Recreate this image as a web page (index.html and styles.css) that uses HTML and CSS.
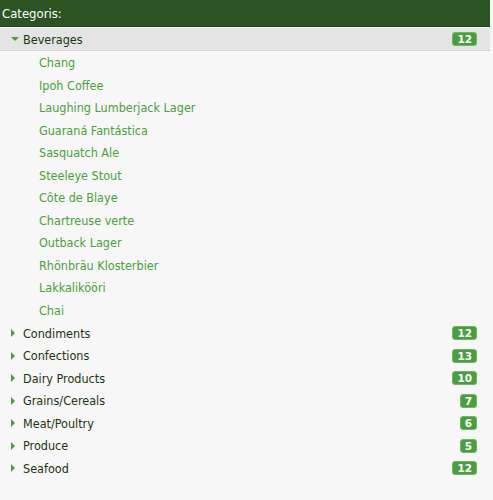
FILE: index.html
```html
<!DOCTYPE html>
<html>
<head>
<meta charset="utf-8">
<link rel="stylesheet" href="styles.css">
</head>
<body>
<div class="panel">
  <div class="header">Categoris:</div>
  <ul class="tree">
    <li class="cat open">
      <div class="row selected"><span class="arrow down"></span><span class="name">Beverages</span><span class="badge">12</span></div>
      <ul class="items">
        <li>Chang</li>
        <li>Ipoh Coffee</li>
        <li>Laughing Lumberjack Lager</li>
        <li>Guaraná Fantástica</li>
        <li>Sasquatch Ale</li>
        <li>Steeleye Stout</li>
        <li>Côte de Blaye</li>
        <li>Chartreuse verte</li>
        <li>Outback Lager</li>
        <li>Rhönbräu Klosterbier</li>
        <li>Lakkalikööri</li>
        <li>Chai</li>
      </ul>
    </li>
    <li class="cat"><div class="row"><span class="arrow right"></span><span class="name">Condiments</span><span class="badge">12</span></div></li>
    <li class="cat"><div class="row"><span class="arrow right"></span><span class="name">Confections</span><span class="badge">13</span></div></li>
    <li class="cat"><div class="row"><span class="arrow right"></span><span class="name">Dairy Products</span><span class="badge">10</span></div></li>
    <li class="cat"><div class="row"><span class="arrow right"></span><span class="name">Grains/Cereals</span><span class="badge">7</span></div></li>
    <li class="cat"><div class="row"><span class="arrow right"></span><span class="name">Meat/Poultry</span><span class="badge">6</span></div></li>
    <li class="cat"><div class="row"><span class="arrow right"></span><span class="name">Produce</span><span class="badge">5</span></div></li>
    <li class="cat"><div class="row"><span class="arrow right"></span><span class="name">Seafood</span><span class="badge">12</span></div></li>
  </ul>
</div>
</body>
</html>
```

FILE: styles.css
```css
html, body {
  margin: 0;
  padding: 0;
  background: #f7f7f7;
}
body {
  font-family: "DejaVu Sans Condensed", "DejaVu Sans", sans-serif;
  font-stretch: condensed;
  font-size: 12px;
}
.panel {
  width: 490px;
}
.header {
  height: 26px;
  line-height: 27px;
  background: #2c5423;
  border-bottom: 1px solid #22431a;
  color: #ffffff;
  padding-left: 2px;
  font-size: 13px;
}
.tree, .items {
  list-style: none;
  margin: 0;
  padding: 0;
}
.row {
  display: flex;
  align-items: center;
  height: 22.5px;
  padding-left: 11px;
  padding-right: 13px;
  color: #1b3411;
  font-size: 12.5px;
}
.row.selected {
  background: #e4e4e4;
  border-bottom: 1px solid #d6d6d6;
  height: 22px;
  margin-top: 1px;
}
.arrow {
  width: 0;
  height: 0;
}
.arrow.down {
  border-left: 4px solid transparent;
  border-right: 4px solid transparent;
  border-top: 4px solid #4a9e3f;
  margin-right: 4px;
}
.arrow.right {
  border-top: 4px solid transparent;
  border-bottom: 4px solid transparent;
  border-left: 4px solid #4a9e3f;
  margin-right: 8px;
}
.name {
  flex: 1;
}
.badge {
  background: #4a9e3f;
  color: #ffffff;
  font-weight: bold;
  font-size: 10.5px;
  line-height: 12px;
  height: 12px;
  padding: 0 4px;
  border: 1px solid #6db663;
  border-radius: 3px;
  font-family: "DejaVu Sans", sans-serif;
  font-stretch: normal;
}
.items li {
  height: 22.5px;
  line-height: 22.5px;
  padding-left: 39px;
  color: #4aa03a;
  font-size: 12.5px;
}
.items li:first-child {
  margin-top: 1px;
}
```
